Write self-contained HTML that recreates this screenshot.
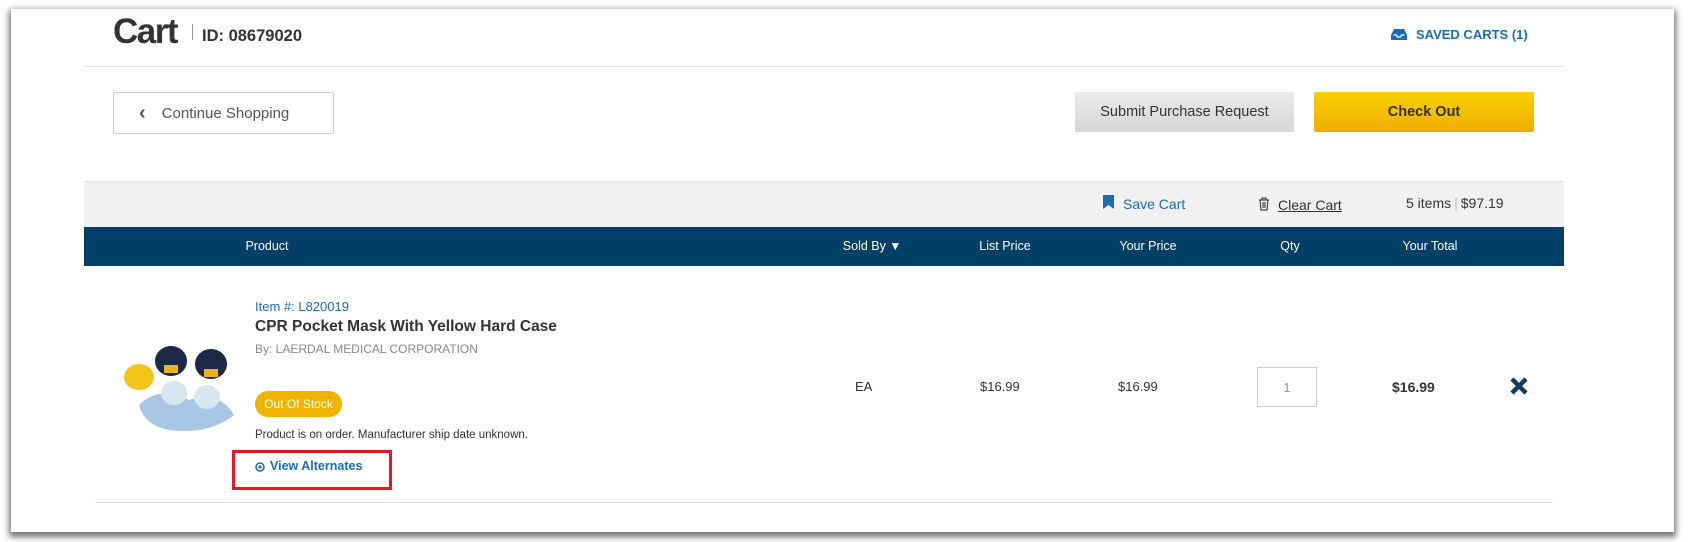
<!DOCTYPE html>
<html><head><meta charset="utf-8"><style>
*{margin:0;padding:0;box-sizing:border-box}
body{width:1693px;height:542px;background:#fff;font-family:"Liberation Sans",Arial,sans-serif;position:relative;overflow:hidden}
.card{position:absolute;left:11px;top:9px;width:1663px;height:523px;background:#fff;box-shadow:0 3px 6px 2px rgba(0,0,0,.55)}
.a{position:absolute;white-space:nowrap}
.th{position:absolute;top:239px;color:#fff;font-size:12.5px;transform:translateX(-50%)}
.btn{position:absolute;border-radius:2px;font-size:14.5px;display:flex;align-items:center;justify-content:center}
</style></head><body>
<div class="card"></div>
<div class="a" style="left:113px;top:12px;font-size:35px;font-weight:bold;color:#333;letter-spacing:-1.5px">Cart</div>
<div class="a" style="left:192px;top:24px;width:1px;height:16px;background:#999"></div>
<div class="a" style="left:202px;top:27px;font-size:16.5px;font-weight:bold;color:#333">ID: 08679020</div>
<svg class="a" style="left:1391px;top:28px" width="16" height="13" viewBox="0 0 16 13"><path d="M3 1h10l3 6v5H0V7z" fill="#1a6db3"/><path d="M2.5 7h3l1 2h3l1-2h3" stroke="#fff" stroke-width="1.3" fill="none"/></svg>
<div class="a" style="left:1416px;top:27px;font-size:13px;font-weight:bold;color:#1a6db3">SAVED CARTS (1)</div>
<div class="a" style="left:84px;top:66px;width:1480px;height:1px;background:#e3e3e3"></div>
<div class="btn" style="left:113px;top:92px;width:221px;height:42px;border:1px solid #ccc;color:#555;justify-content:flex-start;padding-left:25px;font-size:15px"><span style="font-weight:bold;font-size:20px;margin-right:16px;line-height:14px">&#8249;</span>Continue Shopping</div>
<div class="btn" style="left:1075px;top:92px;width:219px;height:40px;background:linear-gradient(#ececec,#d6d6d6);color:#333">Submit Purchase Request</div>
<div class="btn" style="left:1314px;top:92px;width:220px;height:40px;background:linear-gradient(#f8d000,#f0ae00);color:#333;font-weight:bold">Check Out</div>
<div class="a" style="left:84px;top:181px;width:1480px;height:46px;background:#f1f1f1;border-top:1px solid #e4e4e4"></div>
<svg class="a" style="left:1103px;top:195px" width="11" height="14"><path d="M0 0h11v14l-5.5-4L0 14z" fill="#1a6db3"/></svg>
<div class="a" style="left:1123px;top:196px;font-size:14px;color:#1a6db3">Save Cart</div>
<svg class="a" style="left:1258px;top:197px" width="12" height="14"><path d="M1 3h10M4 3V1h4v2M2 3l1 10h6l1-10M5 5v6M7 5v6" stroke="#444" stroke-width="1.2" fill="none"/></svg>
<div class="a" style="left:1278px;top:197px;font-size:14px;color:#333;text-decoration:underline">Clear Cart</div>
<div class="a" style="left:1406px;top:195px;font-size:14px;color:#333">5 items<span style="color:#bbb;margin:0 3px">|</span>$97.19</div>
<div class="a" style="left:84px;top:227px;width:1480px;height:39px;background:#003f66"></div>
<div class="th" style="left:267px">Product</div>
<div class="th" style="left:872px">Sold By <span style="font-size:12px">&#9660;</span></div>
<div class="th" style="left:1005px">List Price</div>
<div class="th" style="left:1148px">Your Price</div>
<div class="th" style="left:1290px">Qty</div>
<div class="th" style="left:1430px">Your Total</div>
<svg class="a" style="left:119px;top:345px" width="124" height="88" viewBox="0 0 124 88">
<ellipse cx="20" cy="32" rx="15" ry="13" fill="#f2c51a"/>
<ellipse cx="52" cy="16" rx="16" ry="15" fill="#1d2748"/><ellipse cx="92" cy="19" rx="16" ry="15" fill="#1d2748"/>
<rect x="45" y="20" width="14" height="8" fill="#e8b520"/><rect x="85" y="24" width="14" height="8" fill="#e8b520"/>
<path d="M20 60 Q40 40 70 55 Q100 45 115 70 Q90 90 50 85 Q25 80 20 60z" fill="#a8c6e6"/>
<ellipse cx="55" cy="48" rx="13" ry="12" fill="#d8e6ee"/><ellipse cx="88" cy="52" rx="13" ry="12" fill="#d8e6ee"/>
</svg>
<div class="a" style="left:255px;top:299px;font-size:13px;color:#1a6db3">Item #: L820019</div>
<div class="a" style="left:255px;top:318px;font-size:15.5px;font-weight:bold;color:#333">CPR Pocket Mask With Yellow Hard Case</div>
<div class="a" style="left:255px;top:342px;font-size:12px;color:#888">By: LAERDAL MEDICAL CORPORATION</div>
<div class="a" style="left:255px;top:391px;width:87px;height:26px;border-radius:13px;background:#f0b400;color:#fff;font-size:12px;display:flex;align-items:center;justify-content:center">Out Of Stock</div>
<div class="a" style="left:255px;top:429px;font-size:11.5px;color:#333">Product is on order. Manufacturer ship date unknown.</div>
<div class="a" style="left:232px;top:450px;width:160px;height:40px;border:3px solid #e3182a"></div>
<svg class="a" style="left:255px;top:462px" width="10" height="10"><circle cx="5" cy="5" r="4" stroke="#1a6db3" stroke-width="1.6" fill="none"/><circle cx="5" cy="5" r="1.6" fill="#1a6db3"/></svg>
<div class="a" style="left:270px;top:459px;font-size:12.5px;font-weight:bold;color:#1a6db3">View Alternates</div>
<div class="a" style="left:855px;top:379px;font-size:13px;color:#333">EA</div>
<div class="a" style="left:980px;top:379px;font-size:13px;color:#333">$16.99</div>
<div class="a" style="left:1118px;top:379px;font-size:13px;color:#333">$16.99</div>
<div class="a" style="left:1257px;top:367px;width:60px;height:40px;border:1px solid #ccc;font-size:13px;color:#999;display:flex;align-items:center;justify-content:center">1</div>
<div class="a" style="left:1392px;top:379px;font-size:14px;font-weight:bold;color:#333">$16.99</div>
<svg class="a" style="left:1509px;top:376px" width="20" height="20"><path d="M3 3L17 17M17 3L3 17" stroke="#0f3d60" stroke-width="4.5"/></svg>
<div class="a" style="left:95px;top:502px;width:1458px;height:1px;background:#e3e3e3"></div>
</body></html>
